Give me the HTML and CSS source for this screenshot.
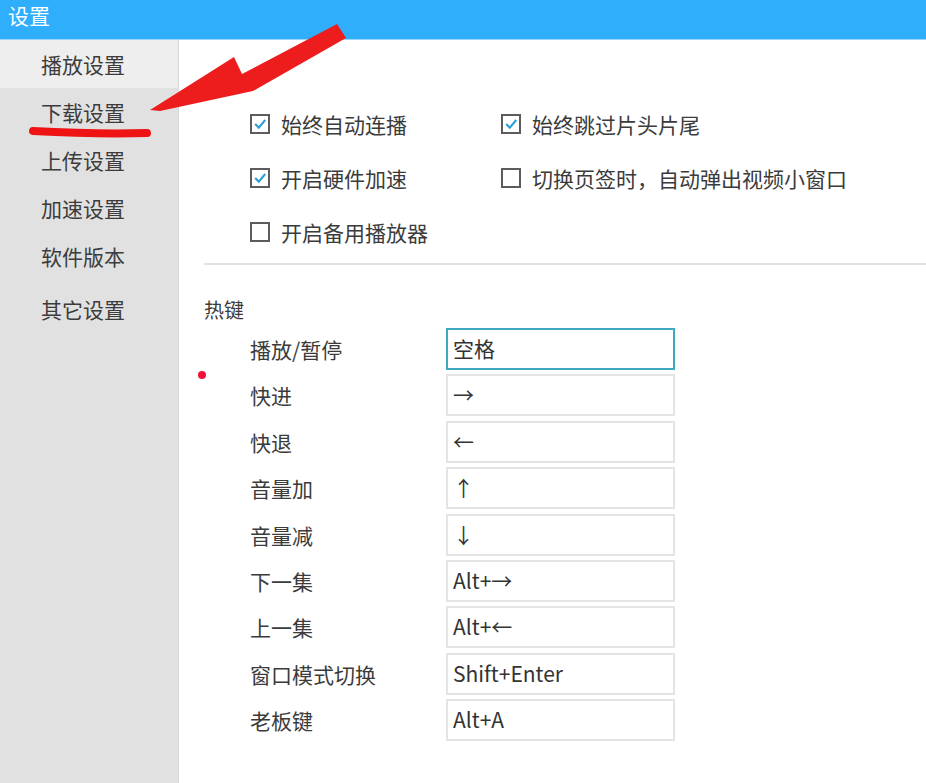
FILE: index.html
```html
<!DOCTYPE html>
<html lang="zh-CN">
<head>
<meta charset="utf-8">
<title>设置</title>
<link rel="stylesheet" href="styles.css">
</head>
<body>
<div class="window">
  <header class="titlebar">设置</header>
  <div class="body">
    <nav class="sidebar">
      <div class="nav-item active">播放设置</div>
      <div class="nav-item">下载设置</div>
      <div class="nav-item">上传设置</div>
      <div class="nav-item">加速设置</div>
      <div class="nav-item">软件版本</div>
      <div class="nav-item last">其它设置</div>
    </nav>
    <main class="content">
      <section class="options">
        <label class="opt"><span class="box checked"><svg viewBox="0 0 20 20"><polyline points="4,10 8.5,14.5 16.5,5" /></svg></span>始终自动连播</label>
        <label class="opt"><span class="box checked"><svg viewBox="0 0 20 20"><polyline points="4,10 8.5,14.5 16.5,5" /></svg></span>始终跳过片头片尾</label>
        <label class="opt"><span class="box checked"><svg viewBox="0 0 20 20"><polyline points="4,10 8.5,14.5 16.5,5" /></svg></span>开启硬件加速</label>
        <label class="opt"><span class="box"></span>切换页签时，自动弹出视频小窗口</label>
        <label class="opt"><span class="box"></span>开启备用播放器</label>
      </section>
      <div class="divider"></div>
      <section class="hotkeys">
        <h3 class="hk-title">热键</h3>
        <div class="hk-row"><span class="hk-label">播放/暂停</span><span class="hk-input focus">空格</span></div>
        <div class="hk-row"><span class="hk-label">快进</span><span class="hk-input">→</span></div>
        <div class="hk-row"><span class="hk-label">快退</span><span class="hk-input">←</span></div>
        <div class="hk-row"><span class="hk-label">音量加</span><span class="hk-input">↑</span></div>
        <div class="hk-row"><span class="hk-label">音量减</span><span class="hk-input">↓</span></div>
        <div class="hk-row"><span class="hk-label">下一集</span><span class="hk-input">Alt+→</span></div>
        <div class="hk-row"><span class="hk-label">上一集</span><span class="hk-input">Alt+←</span></div>
        <div class="hk-row"><span class="hk-label">窗口模式切换</span><span class="hk-input">Shift+Enter</span></div>
        <div class="hk-row"><span class="hk-label">老板键</span><span class="hk-input">Alt+A</span></div>
      </section>
    </main>
  </div>
  <svg class="annotation" viewBox="0 0 926 783" width="926" height="783">
    <polygon class="arrow" points="150,110 234,57 242,74 337,24 346,38 253,91 160,111" />
    <path class="underline" d="M33,131 C70,133 110,134 147,133" />
    <circle class="dot" cx="202" cy="375" r="4" />
  </svg>
</div>
</body>
</html>
```

FILE: styles.css
```css
* { box-sizing: border-box; }
html, body { margin: 0; padding: 0; }
body {
  width: 926px;
  height: 783px;
  overflow: hidden;
  font-family: "Noto Sans CJK SC", "Noto Sans", sans-serif;
  color: #3b3b3b;
  background: #ffffff;
}
.window {
  position: relative;
  width: 926px;
  height: 783px;
  display: flex;
  flex-direction: column;
}
.titlebar {
  height: 40px;
  flex: none;
  background: #2faefc;
  border-bottom: 1px solid #9ad8fc;
  color: #ffffff;
  font-size: 21px;
  line-height: 30px;
  padding-left: 8px;
}
.body {
  flex: 1;
  display: flex;
  min-height: 0;
}
.sidebar {
  width: 179px;
  flex: none;
  background: #e1e1e1;
  border-right: 1px solid #d8d8d8;
}
.nav-item {
  height: 48px;
  padding-left: 41px;
  padding-top: 2px;
  font-size: 21px;
  line-height: 44px;
  color: #3c3c3c;
}
.nav-item.active { background: #eeeeee; }
.nav-item.last { margin-top: 5px; }
.content {
  flex: 1;
  background: #ffffff;
}
.options {
  display: grid;
  grid-template-columns: 251px 1fr;
  padding: 57px 0 0 71px;
}
.opt {
  height: 54px;
  display: flex;
  align-items: center;
  font-size: 21px;
  color: #3b3b3b;
}
.box {
  width: 20px;
  height: 20px;
  flex: none;
  border: 2px solid #5c5c5c;
  margin-right: 11px;
  display: flex;
}
.box svg { width: 16px; height: 16px; }
.box polyline {
  fill: none;
  stroke: #2a9fd8;
  stroke-width: 2.6;
}
.divider {
  height: 2px;
  margin: 4px 0 0 25px;
  background: #e3e3e3;
}
.hotkeys {
  padding: 31px 0 0 25px;
}
.hk-title {
  margin: 0 0 4px 0;
  font-size: 20px;
  font-weight: normal;
  line-height: 28px;
  color: #3b3b3b;
}
.hk-row {
  display: flex;
  align-items: center;
  padding-left: 46px;
  margin-bottom: 4.4px;
}
.hk-label {
  width: 196px;
  font-size: 21px;
  color: #3b3b3b;
}
.hk-input {
  width: 229px;
  height: 42px;
  border: 2px solid #e4e4e4;
  padding-left: 5px;
  font-size: 21px;
  line-height: 36px;
  color: #333333;
}
.hk-input.focus { border-color: #3ca9bd; }
.annotation {
  position: absolute;
  left: 0;
  top: 0;
  pointer-events: none;
}
.arrow { fill: #ee1d1d; }
.underline {
  fill: none;
  stroke: #ee1414;
  stroke-width: 8;
  stroke-linecap: round;
}
.dot { fill: #f0103a; }
```
